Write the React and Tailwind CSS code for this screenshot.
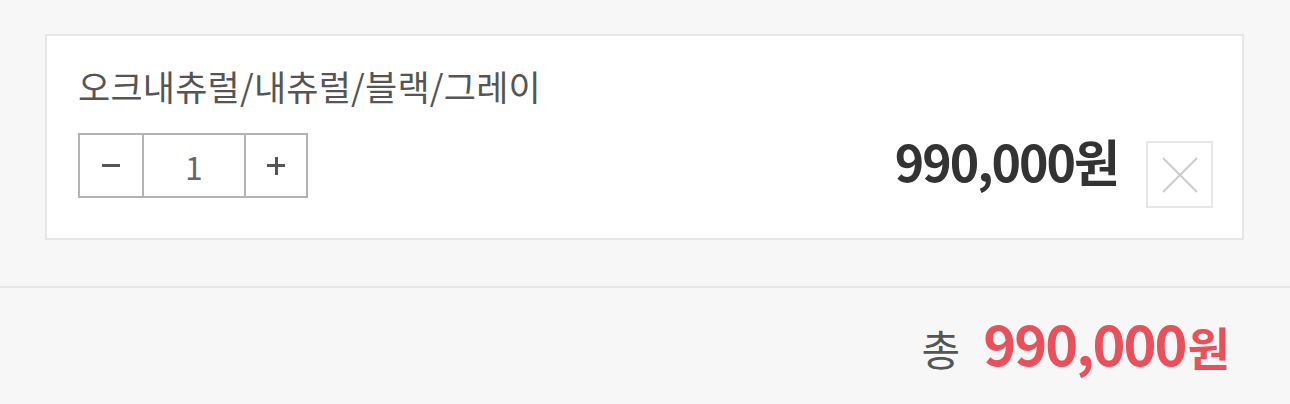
export default function App() {
  const font = { fontFamily: '"Noto Sans CJK KR", "Noto Sans", sans-serif' };
  return (
    <div className="w-[1290px] h-[404px] bg-[#f7f7f7] flex flex-col" style={font}>
      <div className="pt-[34px] pl-[45px] pr-[46px] h-[286px]">
        <div className="h-[206px] border-2 border-[#e6e6e6] bg-white pl-[31px] pr-[29px] pt-[28px] flex flex-col">
          <div className="text-[35px] leading-[44px] text-[#555] tracking-[0.2px]">오크내츄럴/내츄럴/블랙/그레이</div>
          <div className="mt-[25px] flex items-start justify-between">
            <div className="flex h-[65px] border-2 border-[#b3b3b3]">
              <div className="w-[64px] flex items-center justify-center border-r-2 border-[#b3b3b3]">
                <div className="w-[18px] h-[3px] bg-[#555]"></div>
              </div>
              <div className="w-[102px] flex items-center justify-center border-r-2 border-[#b3b3b3] text-[32px] text-[#666] font-normal">1</div>
              <div className="w-[60px] flex items-center justify-center relative">
                <div className="w-[18px] h-[3px] bg-[#555]"></div>
                <div className="absolute w-[3px] h-[18px] bg-[#555]"></div>
              </div>
            </div>
            <div className="flex items-start">
              <div className="mt-[2px] text-[50px] leading-[50px] font-bold text-[#333] tracking-[-2px]">990,000원</div>
              <div className="mt-[8px] ml-[28px] w-[67px] h-[67px] border-2 border-[#e6e6e6] flex items-center justify-center">
                <svg width="36" height="36" viewBox="0 0 36 36">
                  <path d="M1 1 L35 35 M35 1 L1 35" stroke="#cccccc" strokeWidth="2" />
                </svg>
              </div>
            </div>
          </div>
        </div>
      </div>
      <div className="h-[2px] bg-[#e6e6e6]"></div>
      <div className="flex-1 flex items-baseline justify-end pr-[60px] pt-[12px]">
        <span className="text-[42px] text-[#555] mr-[23px]">총</span>
        <span className="text-[56px] font-bold text-[#e8505b] tracking-[-2px]">990,000</span>
        <span className="text-[46px] font-bold text-[#e8505b] ml-[2px]">원</span>
      </div>
    </div>
  );
}
